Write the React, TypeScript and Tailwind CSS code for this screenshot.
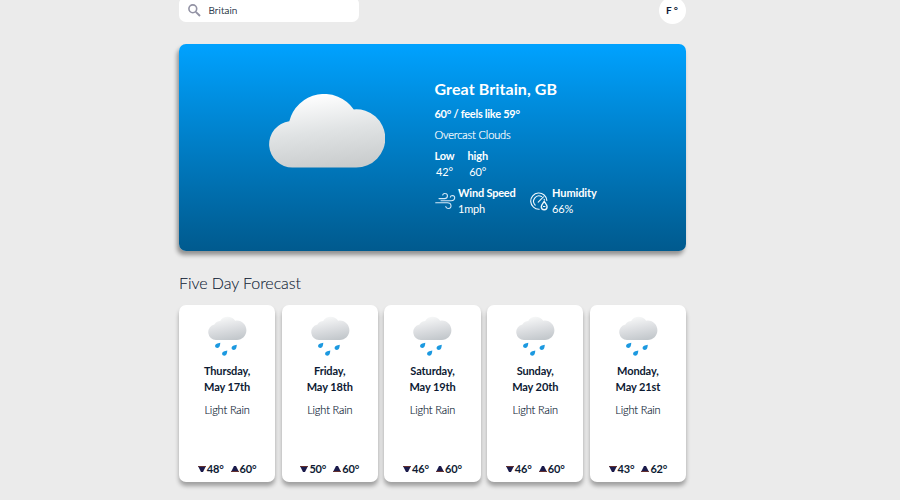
import React from "react";

const days = [
  { name: "Thursday,", date: "May 17th", low: 48, high: 60 },
  { name: "Friday,", date: "May 18th", low: 50, high: 60 },
  { name: "Saturday,", date: "May 19th", low: 46, high: 60 },
  { name: "Sunday,", date: "May 20th", low: 46, high: 60 },
  { name: "Monday,", date: "May 21st", low: 43, high: 62 },
];

function CloudIcon() {
  return (
    <svg viewBox="0 0 117 74" className="mt-[50px] ml-[89px] h-[74px] w-[117px] shrink-0">
      <defs>
        <linearGradient id="cloud" x1="0.4" y1="0" x2="0.6" y2="1">
          <stop offset="0" stopColor="#ffffff" />
          <stop offset="0.5" stopColor="#e0e3e4" />
          <stop offset="1" stopColor="#c9cccd" />
        </linearGradient>
      </defs>
      <path
        d="M24.5 73.5A23.2 23.2 0 0 1 21.3 27.3A36 36 0 0 1 85.8 15.4A29.1 29.1 0 1 1 88 73.5Z"
        fill="url(#cloud)"
      />
    </svg>
  );
}

function RainIcon() {
  return (
    <svg viewBox="0 0 40 42" className="h-[42px] w-10">
      <defs>
        <linearGradient id="rain" x1="0.35" y1="0" x2="0.65" y2="1">
          <stop offset="0" stopColor="#f8f9f9" />
          <stop offset="0.5" stopColor="#dddfe2" />
          <stop offset="1" stopColor="#c2c7cb" />
        </linearGradient>
      </defs>
      <path
        d="M9 25A7.9 7.9 0 0 1 7.4 9.4C9 6.8 11.2 6 13.2 5.9C15.5 .8 24.7-.2 28.2 5.8C34 4.5 39.4 9.5 39.4 15.3C39.4 20.8 35 25 30 25Z"
        fill="url(#rain)"
      />
      <g fill="#1c99e0">
        <path d="M13.3 27.8C13 31 12.6 33 10.4 33C7.8 33 7.4 30 9.3 29C10.6 28.4 12.1 28.4 13.3 27.8Z" />
        <path d="M29.8 29.8C29.5 33 29.1 35 26.9 35C24.3 35 23.9 32 25.8 31C27.1 30.4 28.6 30.4 29.8 29.8Z" />
        <path d="M20.3 35.6C20 38.8 19.6 40.8 17.4 40.8C14.8 40.8 14.4 37.8 16.3 36.8C17.6 36.2 19.1 36.2 20.3 35.6Z" />
      </g>
    </svg>
  );
}

function WindIcon() {
  return (
    <svg viewBox="0 0 21 18" className="mt-[7px] h-[18px] w-[21px] shrink-0" fill="none" stroke="#d5e9f7" strokeWidth="1.1" strokeLinecap="round">
      <path d="M4 6.6H9.5C13.2 6.6 13.4 1.8 10.2 1.5C9 1.3 8 2 7.7 3" />
      <path d="M6 8.8H16.2C20.4 8.8 20.8 3.7 17.5 3.5C16.3 3.5 15.5 4.2 15.3 5.1" />
      <path d="M.7 10.8H12.3C17 10.8 17 16.4 13.6 16.5C12.1 16.5 11 15.7 10.8 14.5" />
    </svg>
  );
}

function HumidityIcon() {
  return (
    <svg viewBox="0 0 19 19" className="mt-[7px] h-[19px] w-[19px] shrink-0" fill="none" stroke="#eff8fd" strokeWidth="1.1" strokeLinecap="round">
      <path d="M9.3 17.2A8.1 8.1 0 1 1 16.9 8.5" />
      <path d="M5.2 13.1A5.4 5.4 0 0 1 11.5 4.5M8.2 10.2L13.4 4.8M14.1 7.2L14.5 8" />
      <path d="M14.2 9.5C12.6 11.7 11.3 13 11.3 14.8A2.9 2.9 0 0 0 17.1 14.8C17.1 13 15.8 11.7 14.2 9.5Z" strokeWidth="1.4" />
      <path d="M13.4 14.5H15" strokeWidth="1" />
    </svg>
  );
}

export default function App() {
  return (
    <div className="h-[500px] overflow-hidden bg-[#ebebeb] font-[Lato,sans-serif] text-[#0d1a33]">
      <div className="ml-[179px] w-[507px]">
        <header className="-mt-[3px] flex h-[27px] items-start justify-between">
          <div className="flex h-[25px] w-[180px] items-center rounded-[7px] bg-white pl-[9px]">
            <svg viewBox="0 0 14 14" className="mt-[2px] h-[14px] w-[14px]" fill="none" stroke="#9292a4" strokeWidth="1.6">
              <circle cx="4.8" cy="4.8" r="3.9" />
              <path d="M7.8 7.8L12 12" strokeWidth="1.9" />
            </svg>
            <span className="ml-[6.5px] text-[10px] leading-4 font-light tracking-[0.14px] [-webkit-text-stroke:0.2px_#0d1a33]">Britain</span>
          </div>
          <div className="flex h-[27px] w-[27px] items-center justify-center rounded-full bg-white pr-px text-[10px] font-bold">F °</div>
        </header>

        <section className="mt-5 flex h-[207px] rounded-[7px] bg-linear-to-b from-[#00a2ff] to-[#005a8e] text-white shadow-[-2px_4px_4px_rgba(0,0,0,0.38)]">
          <CloudIcon />
          <div className="ml-[49.5px] pt-[34px]">
            <h1 className="h-[21px] text-[16px] leading-[21px] font-bold tracking-[0.1px]">Great Britain, GB</h1>
            <p className="mt-[7px] h-4 text-[11px] leading-4 font-bold tracking-[-0.27px]">60° / feels like 59°</p>
            <p className="mt-[5px] h-4 text-[11px] leading-4 font-light tracking-[-0.14px] [-webkit-text-stroke:0.2px_white]">Overcast Clouds</p>
            <div className="mt-[5px] flex gap-[13px] text-center text-[11px] leading-4 tracking-[-0.15px]">
              <div>
                <p className="font-bold">Low</p>
                <p>42°</p>
              </div>
              <div>
                <p className="font-bold">high</p>
                <p>60°</p>
              </div>
            </div>
            <div className="mt-[5px] flex text-[11px] leading-4">
              <div className="flex w-[95px] gap-[2.5px] tracking-[-0.2px]">
                <WindIcon />
                <div className="whitespace-nowrap">
                  <p className="font-bold">Wind Speed</p>
                  <p>1mph</p>
                </div>
              </div>
              <div className="flex gap-[3.5px] tracking-[-0.1px]">
                <HumidityIcon />
                <div>
                  <p className="font-bold">Humidity</p>
                  <p>66%</p>
                </div>
              </div>
            </div>
          </div>
        </section>

        <h2 className="mt-[22px] h-5 text-[16px] leading-5 font-light tracking-[-0.06px] [-webkit-text-stroke:0.1px_#0d1a33]">Five Day Forecast</h2>

        <section className="mt-3 grid grid-cols-5 gap-[6.5px]">
          {days.map((day) => (
            <article key={day.name} className="flex h-[177px] flex-col items-center rounded-[7px] bg-white pt-[10px] text-[11px] leading-4 shadow-[0_4px_4px_rgba(0,0,0,0.32)]">
              <RainIcon />
              <p className="mt-[6px] font-bold tracking-[-0.12px]">{day.name}</p>
              <p className="font-bold tracking-[-0.1px]">{day.date}</p>
              <p className="mt-[7px] font-light tracking-[-0.15px] [-webkit-text-stroke:0.15px_#0d1a33]">Light Rain</p>
              <div className="mt-auto mb-[5px] flex items-center font-bold tracking-[-0.15px]">
                <svg viewBox="0 0 8 6" className="mr-[1px] h-[6px] w-2">
                  <path d="M0 0H8L5 6H3Z" fill="#1b1b4b" />
                  <path d="M0 0H8L7.5 1H.5Z" fill="#65302d" />
                </svg>
                <span>{day.low}°</span>
                <svg viewBox="0 0 8 6" className="mr-[1px] ml-[7px] h-[6px] w-2">
                  <path d="M3 0H5L8 6H0Z" fill="#1b1b4b" />
                  <path d="M.5 5H7.5L8 6H0Z" fill="#65302d" />
                </svg>
                <span>{day.high}°</span>
              </div>
            </article>
          ))}
        </section>
      </div>
    </div>
  );
}
